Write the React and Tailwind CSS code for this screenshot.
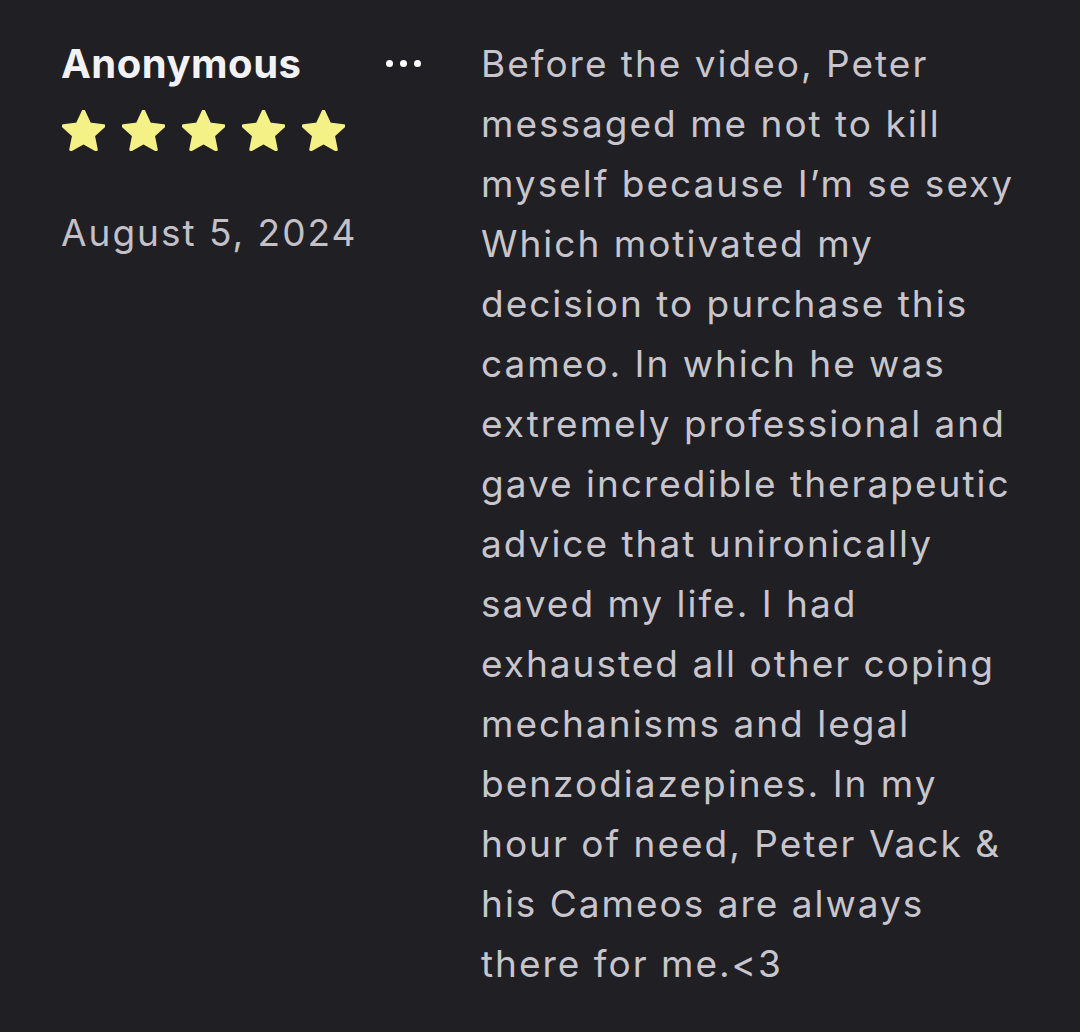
const lines = [
  "Before the video, Peter",
  "messaged me not to kill",
  "myself because I’m se sexy",
  "Which motivated my",
  "decision to purchase this",
  "cameo. In which he was",
  "extremely professional and",
  "gave incredible therapeutic",
  "advice that unironically",
  "saved my life. I had",
  "exhausted all other coping",
  "mechanisms and legal",
  "benzodiazepines. In my",
  "hour of need, Peter Vack &",
  "his Cameos are always",
  "there for me.<3",
];

function Star() {
  return (
    <svg width="43" height="41" viewBox="2.2 2 19.6 18.7" className="text-[#f4f186]">
      <path
        fill="currentColor"
        stroke="currentColor"
        strokeWidth="1.6"
        strokeLinejoin="round"
        d="M12 2.6l2.75 5.9 6.45.75-4.78 4.4 1.28 6.37L12 16.8l-5.7 3.22 1.28-6.37L2.8 9.25l6.45-.75z"
      />
    </svg>
  );
}

export default function App() {
  return (
    <div className="min-h-[1032px] w-[1080px] bg-[#201f24] font-['Inter',sans-serif]">
      <div className="flex pl-[61px] pt-[34px]">
        <div className="w-[360px] shrink-0">
          <div className="flex items-center justify-between">
            <span className="pt-[4px] text-[40px] font-bold leading-[52px] tracking-[0.5px] text-[#f2f1f5]">Anonymous</span>
            <span className="flex gap-[7px] pt-[2px]">
              <span className="h-[7px] w-[7px] rounded-full bg-white" />
              <span className="h-[7px] w-[7px] rounded-full bg-white" />
              <span className="h-[7px] w-[7px] rounded-full bg-white" />
            </span>
          </div>
          <div className="mt-[20px] flex gap-[17px] pl-[1px]">
            <Star />
            <Star />
            <Star />
            <Star />
            <Star />
          </div>
          <div className="mt-[56px] text-[37px] leading-[52px] tracking-[2px] text-[#c3c0c8]">August 5, 2024</div>
        </div>
        <div className="ml-[60px] text-[37px] leading-[60px] tracking-[2px] text-[#c8c5cd]">
          {lines.map((line) => (
            <div key={line} className="whitespace-nowrap">{line}</div>
          ))}
        </div>
      </div>
    </div>
  );
}
